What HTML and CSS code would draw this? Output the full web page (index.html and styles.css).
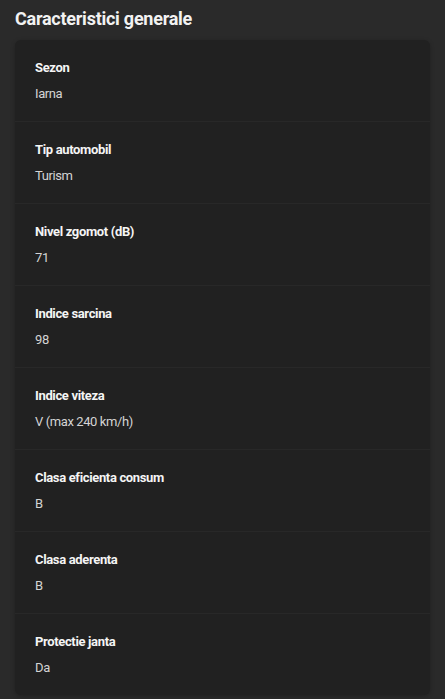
FILE: index.html
```html
<!DOCTYPE html>
<html lang="ro">
<head>
<meta charset="utf-8">
<title>Caracteristici generale</title>
<link rel="stylesheet" href="styles.css">
</head>
<body>
<main class="page">
  <h2 class="title">Caracteristici generale</h2>
  <section class="card">
    <div class="row"><div class="label">Sezon</div><div class="value">Iarna</div></div>
    <div class="row"><div class="label">Tip automobil</div><div class="value">Turism</div></div>
    <div class="row"><div class="label">Nivel zgomot (dB)</div><div class="value">71</div></div>
    <div class="row"><div class="label">Indice sarcina</div><div class="value">98</div></div>
    <div class="row"><div class="label">Indice viteza</div><div class="value">V (max 240 km/h)</div></div>
    <div class="row"><div class="label">Clasa eficienta consum</div><div class="value">B</div></div>
    <div class="row"><div class="label">Clasa aderenta</div><div class="value">B</div></div>
    <div class="row"><div class="label">Protectie janta</div><div class="value">Da</div></div>
  </section>
</main>
</body>
</html>
```

FILE: styles.css
```css
html, body {
  margin: 0;
  padding: 0;
  background: #2a2a2a;
  font-family: Roboto, "Noto Sans", sans-serif;
  color: #e6e6e6;
}

.page {
  padding: 8px 15px 10px 15px;
}

.title {
  margin: 0 0 10px 0;
  font-size: 18px;
  line-height: 22px;
  font-weight: 700;
  letter-spacing: -0.25px;
  color: #f2f2f2;
}

.card {
  background: #212121;
  border-radius: 6px;
  box-shadow: 0 1px 4px rgba(0,0,0,0.25);
}

.row {
  padding: 18px 20px 17px 20px;
  border-bottom: 1px solid #282828;
}

.row:last-child {
  border-bottom: none;
}

.label {
  font-size: 13px;
  line-height: 20px;
  font-weight: 700;
  letter-spacing: -0.35px;
  color: #f5f5f5;
}

.value {
  margin-top: 6px;
  font-size: 13px;
  line-height: 20px;
  letter-spacing: -0.4px;
  color: #d4d4d4;
}
```
